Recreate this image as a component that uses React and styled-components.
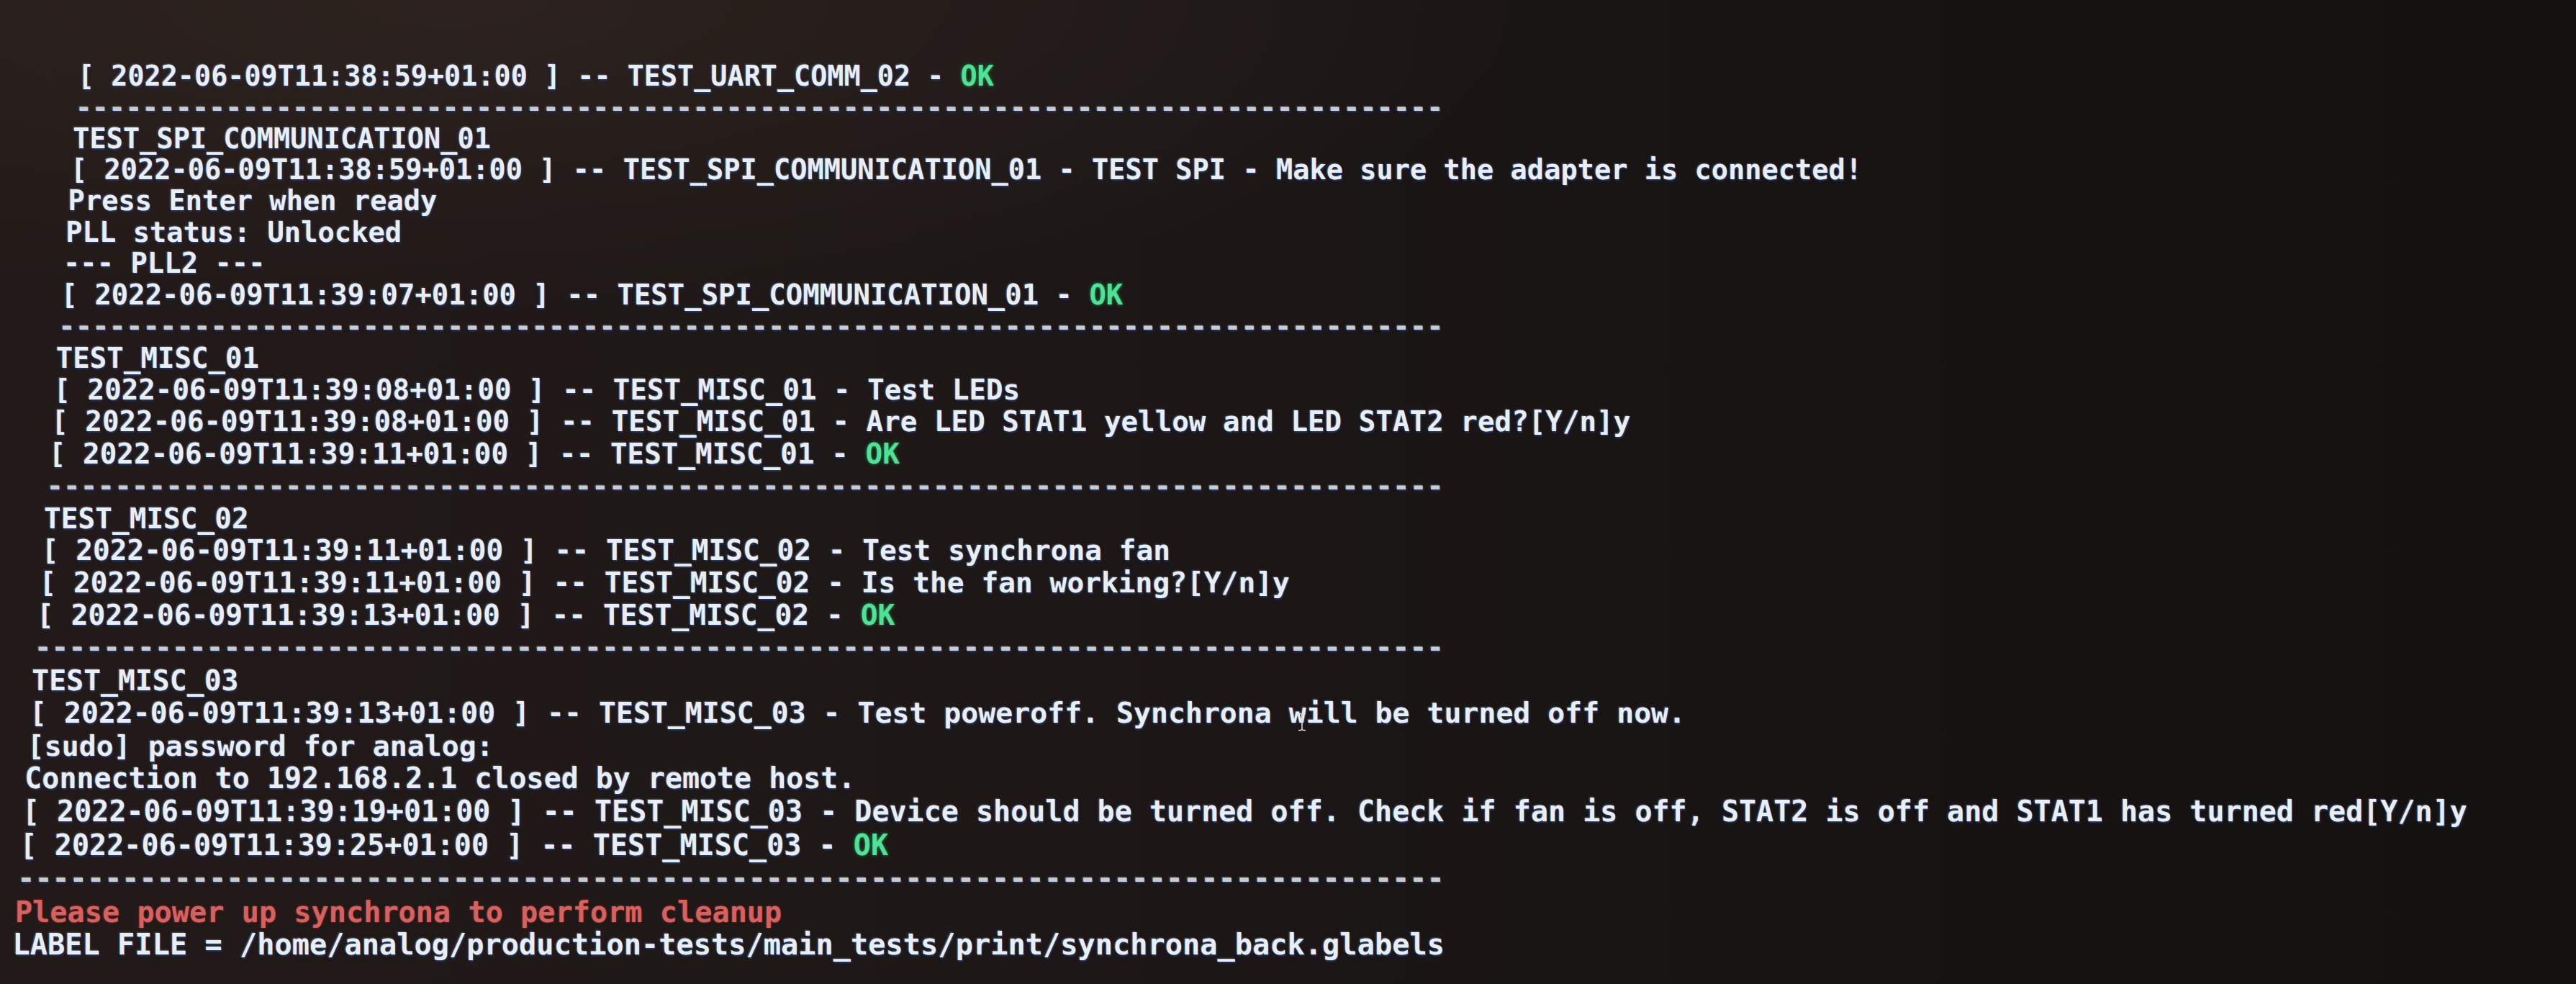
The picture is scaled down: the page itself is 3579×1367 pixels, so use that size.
import styled, { createGlobalStyle } from "styled-components";

const GlobalStyle = createGlobalStyle`
  html, body {
    margin: 0;
    padding: 0;
    background: #1a1515;
  }
  body {
    width: 3579px;
    height: 1367px;
    overflow: hidden;
  }
`;

const ROWS = 27;
const fontSize = (i) => 38.45 + (1.85 * i) / ROWS;
const lineHeight = (i) => 42.9 + (3.6 * i) / ROWS;
const indent = (i) => 108 - 3.35 * i;

const DASHES = "-".repeat(82);

const log = (time, name, msg, ok) => {
  const head = `[ 2022-06-09T11:${time}+01:00 ] -- ${name} - `;
  if (ok) return [[head], ["OK", "ok"]];
  return [[head + msg]];
};

const lines = [
  log("38:59", "TEST_UART_COMM_02", null, true),
  [[DASHES, "rule"]],
  [["TEST_SPI_COMMUNICATION_01"]],
  log("38:59", "TEST_SPI_COMMUNICATION_01", "TEST SPI - Make sure the adapter is connected!"),
  [["Press Enter when ready"]],
  [["PLL status: Unlocked"]],
  [["--- PLL2 ---"]],
  log("39:07", "TEST_SPI_COMMUNICATION_01", null, true),
  [[DASHES, "rule"]],
  [["TEST_MISC_01"]],
  log("39:08", "TEST_MISC_01", "Test LEDs"),
  log("39:08", "TEST_MISC_01", "Are LED STAT1 yellow and LED STAT2 red?[Y/n]y"),
  log("39:11", "TEST_MISC_01", null, true),
  [[DASHES, "rule"]],
  [["TEST_MISC_02"]],
  log("39:11", "TEST_MISC_02", "Test synchrona fan"),
  log("39:11", "TEST_MISC_02", "Is the fan working?[Y/n]y"),
  log("39:13", "TEST_MISC_02", null, true),
  [[DASHES, "rule"]],
  [["TEST_MISC_03"]],
  log("39:13", "TEST_MISC_03", "Test poweroff. Synchrona will be turned off now."),
  [["[sudo] password for analog:"]],
  [["Connection to 192.168.2.1 closed by remote host."]],
  log(
    "39:19",
    "TEST_MISC_03",
    "Device should be turned off. Check if fan is off, STAT2 is off and STAT1 has turned red[Y/n]y"
  ),
  log("39:25", "TEST_MISC_03", null, true),
  [[DASHES, "rule"]],
  [["Please power up synchrona to perform cleanup", "warn"]],
  [["LABEL FILE = /home/analog/production-tests/main_tests/print/synchrona_back.glabels"]],
];

const App = () => {
  return (
    <>
      <GlobalStyle />
      <Screen>
        <Output>
          {lines.map((parts, i) => (
            <Line key={i} $i={i}>
              {parts.map(([text, kind], j) => (
                <Span key={j} $kind={kind}>
                  {text}
                </Span>
              ))}
            </Line>
          ))}
        </Output>
        <Cursor viewBox="0 0 14 26" aria-hidden="true">
          <path
            d="M2 1.5h3.5L7 3l1.5-1.5H12M7 3v20M2 24.5h3.5L7 23l1.5 1.5H12"
            fill="none"
            stroke="#d8d8d8"
            strokeWidth="1.6"
          />
        </Cursor>
      </Screen>
    </>
  );
};

export default App;

const Screen = styled.main`
  position: relative;
  width: 3579px;
  height: 1367px;
  overflow: hidden;
  background:
    radial-gradient(ellipse 60% 45% at 18% 0%, rgba(70, 52, 44, 0.35), transparent 70%),
    linear-gradient(90deg, #221a18 0%, #1c1716 45%, #171313 75%, #141111 100%);
`;

const Output = styled.div`
  display: flex;
  flex-direction: column;
  padding-top: 85px;
  font-family: "DejaVu Sans Mono", "Liberation Mono", monospace;
  font-weight: bold;
  color: #e9eef2;
  text-shadow:
    1px 2px 2px rgba(30, 60, 120, 0.85),
    -1px -1px 2px rgba(170, 200, 255, 0.35);
`;

const Line = styled.div`
  white-space: pre;
  font-size: ${({ $i }) => fontSize($i)}px;
  line-height: ${({ $i }) => lineHeight($i)}px;
  height: ${({ $i }) => lineHeight($i)}px;
  padding-left: ${({ $i }) => indent($i)}px;
`;

const Span = styled.span`
  color: ${({ $kind }) =>
    $kind === "ok"
      ? "#4fe195"
      : $kind === "warn"
      ? "#d8605f"
      : $kind === "rule"
      ? "#c9cbcd"
      : "inherit"};
  text-shadow: ${({ $kind }) =>
    $kind === "ok"
      ? "0 0 4px rgba(40, 200, 110, 0.7)"
      : $kind === "warn"
      ? "0 0 3px rgba(200, 70, 70, 0.6)"
      : "inherit"};
`;

const Cursor = styled.svg`
  position: absolute;
  left: 1802px;
  top: 990px;
  width: 14px;
  height: 26px;
`;
